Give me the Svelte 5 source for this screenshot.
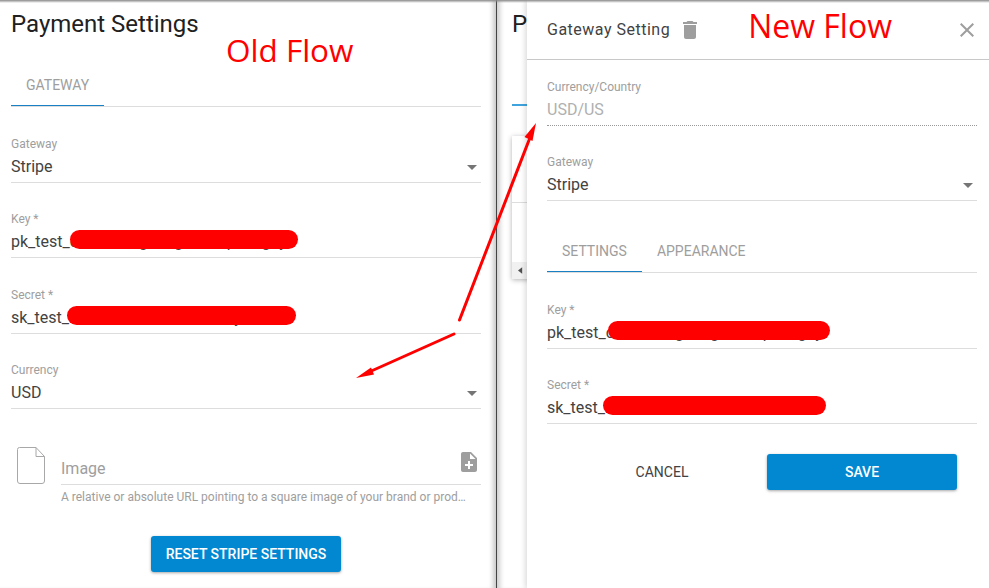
<script>
	const oldFields = [
		{ label: 'Gateway', value: 'Stripe', select: true },
		{ label: 'Key *', value: 'pk_test_caaaaaaagaaagaaaaapaaagay', mask: 'mask-old-key' },
		{ label: 'Secret *', value: 'sk_test_aaaaaaaaaaaaaaaaaaayaaaa', mask: 'mask-old-secret' },
		{ label: 'Currency', value: 'USD', select: true }
	];
	const newFields = [
		{ label: 'Key *', value: 'pk_test_caaaaaaagaaagaaaaapaaagay', mask: 'mask-new-key' },
		{ label: 'Secret *', value: 'sk_test_aaaaaaaaaaaaaaaaaaaaaaa', mask: 'mask-new-secret' }
	];
</script>

{#snippet field(f)}
	<div class="field">
		<div class="label">{f.label}</div>
		<div class="value">
			<span>{f.value}</span>
			{#if f.mask}<i class="mask {f.mask}"></i>{/if}
			{#if f.select}
				<svg class="caret" viewBox="0 0 24 24"><path d="M7 10l5 5 5-5z" /></svg>
			{/if}
		</div>
	</div>
{/snippet}

<main class="page">
	<section class="old">
		<h1>Payment Settings</h1>
		<div class="note note-old">Old Flow</div>
		<div class="tabs">
			<div class="tab active">GATEWAY</div>
		</div>
		<div class="fields">
			{#each oldFields as f}
				{@render field(f)}
			{/each}
		</div>
		<div class="image-row">
			<svg class="file" viewBox="0 0 28 37">
				<path d="M2.5 .5H19L27.5 9.5V34a2.5 2.5 0 0 1-2.5 2.5H3A2.5 2.5 0 0 1 .5 34V2.5A2 2 0 0 1 2.5 .5zM19 .5V9.5H27.5" />
			</svg>
			<div class="image-main">
				<div class="image-input">
					<span>Image</span>
					<svg class="add" viewBox="0 0 24 24">
						<path d="M14 2H6c-1.1 0-1.99.9-1.99 2L4 20c0 1.1.89 2 1.99 2H18c1.1 0 2-.9 2-2V8l-6-6zm2 14h-3v3h-2v-3H8v-2h3v-3h2v3h3v2zm-3-7V3.5L18.5 9H13z" />
					</svg>
				</div>
				<div class="hint">A relative or absolute URL pointing to a square image of your brand or product.</div>
			</div>
		</div>
		<div class="center">
			<button class="primary reset">RESET STRIPE SETTINGS</button>
		</div>
	</section>

	<section class="behind">
		<div class="behind-inner">
			<h1 aria-hidden="true">P</h1>
			<div class="behind-tab"></div>
			<div class="card">
				<div class="card-line"></div>
				<div class="scrollbar"><svg viewBox="0 0 6 8"><path d="M5 0v8L0 4z" /></svg></div>
			</div>
		</div>
	</section>

	<section class="drawer">
		<header>
			<span class="drawer-title">Gateway Setting</span>
			<svg class="trash" viewBox="0 0 24 24">
				<path d="M6 19c0 1.1.9 2 2 2h8c1.1 0 2-.9 2-2V7H6v12zM19 4h-3.5l-1-1h-5l-1 1H5v2h14V4z" />
			</svg>
			<span class="note">New Flow</span>
			<svg class="close" viewBox="0 0 24 24">
				<path d="M19 6.41L17.59 5 12 10.59 6.41 5 5 6.41 10.59 12 5 17.59 6.41 19 12 13.41 17.59 19 19 17.59 13.41 12z" />
			</svg>
		</header>
		<div class="drawer-body">
			<div class="field readonly">
				<div class="label">Currency/Country</div>
				<div class="value">USD/US</div>
			</div>
			{@render field({ label: 'Gateway', value: 'Stripe', select: true })}
			<div class="tabs drawer-tabs">
				<div class="tab active">SETTINGS</div>
				<div class="tab">APPEARANCE</div>
			</div>
			{#each newFields as f}
				{@render field(f)}
			{/each}
			<div class="actions">
				<button class="cancel">CANCEL</button>
				<button class="primary save">SAVE</button>
			</div>
		</div>
	</section>

	<svg class="arrows" viewBox="0 0 989 588">
		<path class="shaft" d="M459.5 320L531 135" />
		<path class="head" d="M536 123L524.5 137L532.5 141z" />
		<path class="shaft" d="M454 334L368 372.500" />
		<path class="head" d="M356 378L371 367.500L374 374.500z" />
	</svg>
	<div class="topshade"></div>
</main>

<style>
	:global(body) {
		margin: 0;
		background: #fff;
		font-family: Roboto, sans-serif;
		color: #333;
	}

	.page {
		position: relative;
		display: flex;
		width: 989px;
		height: 588px;
		overflow: hidden;
		background: #fff;
	}

	h1 {
		margin: 0;
		font-size: 24px;
		font-weight: 400;
		line-height: 32px;
		padding-top: 8px;
		color: #212121;
		white-space: nowrap;
	}

	.old {
		position: relative;
		box-sizing: border-box;
		width: 496px;
		flex: none;
		padding: 0 15px 0 11px;
		box-shadow: inset -6px 0 5px -3px rgba(0, 0, 0, 0.22);
	}

	.note {
		font-family: 'Open Sans', sans-serif;
		font-size: 31.500px;
		line-height: 40px;
		color: #f00;
		white-space: nowrap;
	}

	.note-old {
		position: absolute;
		left: 226px;
		top: 30px;
	}

	.tabs {
		display: flex;
		margin-top: 25px;
		border-bottom: 1px solid #ddd;
	}

	.tab {
		height: 40px;
		line-height: 40px;
		padding: 0 15px;
		font-size: 14px;
		color: #9e9e9e;
	}

	.tab.active {
		border-bottom: 1px solid #1a80c4;
	}

	.fields {
		margin-top: 29px;
	}

	.field {
		margin-bottom: 28.33px;
		border-bottom: 1px solid #ddd;
		padding-bottom: 3px;
	}

	.label {
		font-size: 12px;
		line-height: 16px;
		color: #9e9e9e;
	}

	.value {
		position: relative;
		margin-top: 3px;
		font-size: 16px;
		line-height: 24px;
		color: #424242;
		white-space: nowrap;
	}

	.mask {
		position: absolute;
		top: 0;
		height: 19px;
		background: #f00;
		border-radius: 10px;
	}

	.mask-old-key {
		left: 59px;
		width: 228px;
	}

	.mask-old-secret {
		left: 56px;
		width: 229px;
	}

	.mask-new-key {
		left: 61px;
		width: 222px;
	}

	.mask-new-secret {
		left: 56px;
		width: 223px;
	}

	.caret {
		position: absolute;
		right: -3px;
		top: 0;
		width: 24px;
		height: 24px;
		fill: #757575;
	}

	.image-row {
		display: flex;
		margin-top: 38px;
	}

	.file {
		flex: none;
		width: 28px;
		height: 37px;
		margin-left: 6px;
		fill: none;
		stroke: #a8a8a8;
		stroke-width: 1;
	}

	.image-main {
		flex: 1;
		min-width: 0;
		margin-left: 16px;
	}

	.image-input {
		display: flex;
		justify-content: space-between;
		height: 38px;
		border-bottom: 1px solid #ddd;
		box-sizing: border-box;
		font-size: 16px;
		color: #9e9e9e;
	}

	.image-input span {
		margin-top: 12px;
		line-height: 20px;
	}

	.add {
		width: 24px;
		height: 24px;
		margin-top: 3px;
		fill: #9e9e9e;
	}

	.hint {
		margin-top: 4px;
		padding-right: 15px;
		font-size: 12px;
		line-height: 16px;
		color: #9e9e9e;
		white-space: nowrap;
		overflow: hidden;
		text-overflow: ellipsis;
	}

	.center {
		display: flex;
		justify-content: center;
		margin-top: 31px;
	}

	button {
		font-family: Roboto, sans-serif;
		font-size: 14px;
		font-weight: 500;
		border: none;
		height: 36px;
		padding: 0;
		background: none;
	}

	.primary {
		width: 190px;
		color: #fff;
		background: #0288d1;
		border-radius: 3px;
		box-shadow: 0 1px 3px rgba(0, 0, 0, 0.35);
	}

	.behind {
		flex: none;
		box-sizing: border-box;
		width: 31px;
		border-left: 1px solid #444;
		overflow: hidden;
		box-shadow: inset 6px 0 5px -3px rgba(0, 0, 0, 0.2);
	}

	.behind-inner {
		position: relative;
		width: 400px;
		padding-left: 15px;
		height: 100%;
	}

	.behind-tab {
		width: 80px;
		height: 2px;
		margin-top: 64px;
		background: #3fa4de;
	}

	.card {
		margin-top: 30px;
		width: 300px;
		height: 143px;
		background: #fff;
		box-shadow: 0 1px 5px rgba(0, 0, 0, 0.3);
		position: relative;
	}

	.card-line {
		position: absolute;
		left: 0;
		right: 0;
		top: 66px;
		border-top: 1px solid #ddd;
	}

	.scrollbar {
		position: absolute;
		left: 0;
		right: 0;
		bottom: 0;
		height: 17px;
		background: #f1f1f1;
	}

	.scrollbar svg {
		display: block;
		width: 5px;
		height: 7px;
		margin: 5px 0 0 6px;
		fill: #505050;
	}

	.drawer {
		position: relative;
		flex: 1;
		min-width: 0;
		background: #fff;
		box-shadow: -2px 0 5px rgba(0, 0, 0, 0.14);
	}

	.drawer header {
		display: flex;
		align-items: center;
		height: 59px;
		padding: 0 10px 0 20px;
		border-bottom: 1px solid #c8c8c8;
	}

	.drawer-title {
		font-size: 16px;
		color: #424242;
		letter-spacing: 0.5px;
		white-space: nowrap;
	}

	.trash {
		width: 24px;
		height: 24px;
		margin-left: 8px;
		fill: #9e9e9e;
	}

	.drawer header .note {
		font-size: 32px;
		margin-left: 46px;
		margin-top: -8px;
	}

	.close {
		width: 24px;
		height: 24px;
		margin-left: auto;
		fill: #9e9e9e;
	}

	.drawer-body {
		padding: 19px 12px 0 20px;
	}

	.readonly {
		border-bottom: 1px dotted #999;
	}

	.readonly .value {
		color: #b0b0b0;
	}

	.drawer-tabs {
		margin-top: 0;
		padding-top: 1px;
		margin-bottom: 29px;
	}

	.actions {
		display: flex;
		padding-top: 2px;
		padding-left: 30px;
	}

	.cancel {
		width: 170px;
		margin-right: 20px;
		font-weight: 400;
		color: #424242;
	}

	.arrows {
		position: absolute;
		left: 0;
		top: 0;
		width: 989px;
		height: 588px;
		pointer-events: none;
	}

	.shaft {
		fill: none;
		stroke: #f00;
		stroke-width: 3;
		stroke-linecap: round;
	}

	.head {
		fill: #f00;
	}

	.topshade {
		position: absolute;
		left: 0;
		right: 0;
		top: 0;
		height: 3px;
		background: linear-gradient(#8a8a8a, rgba(160, 160, 160, 0));
		pointer-events: none;
	}
</style>
